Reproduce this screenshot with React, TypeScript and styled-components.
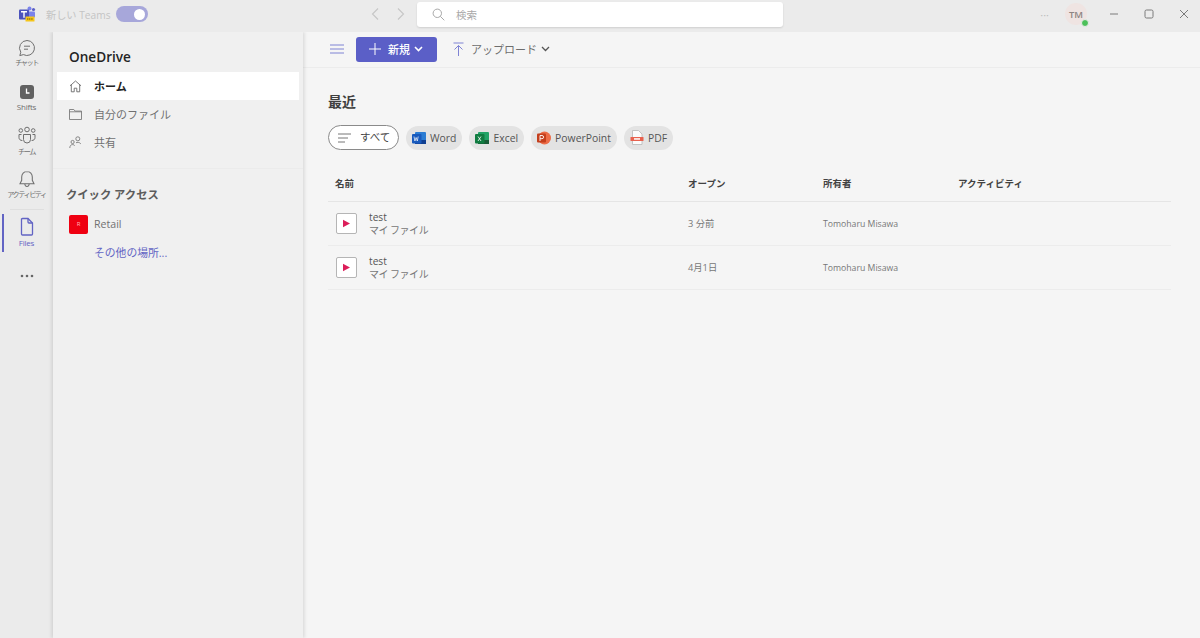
import React from "react";
import styled, { createGlobalStyle } from "styled-components";

const Global = createGlobalStyle`
  html, body { margin: 0; padding: 0; height: 100%; overflow: hidden; }
  body { font-family: "Open Sans", "Noto Sans CJK JP", sans-serif; background: #f5f5f5; }
  #root { height: 100%; }
  * { box-sizing: border-box; }
`;

const Page = styled.div`
  width: 1200px; height: 638px; display: flex; flex-direction: column; background: #f5f5f5; overflow: hidden;
`;
const TitleBar = styled.header`
  height: 32px; flex: none; background: #ebebeb; display: flex; align-items: center; padding-bottom: 4px;
`;
const TitleLeft = styled.div`
  width: 370px; padding-left: 18px; display: flex; align-items: center; flex: none;
`;
const NewTeams = styled.span`
  font-size: 10.2px; color: #c4c4c4; margin-left: 10px; white-space: nowrap; width: 60px;
`;
const Toggle = styled.span`
  width: 32px; height: 16px; border-radius: 8px; background: #a7a7da; margin-left: 10px; display: flex; align-items: center; justify-content: flex-end; padding-right: 3px;
`;
const Knob = styled.span`
  width: 11px; height: 11px; border-radius: 50%; background: #fff;
`;
const NavArrows = styled.div`
  width: 36px; display: flex; justify-content: space-between; align-items: center; margin-right: 11px; flex: none;
`;
const SearchBox = styled.div`
  width: 366px; height: 25px; background: #fff; border-radius: 3px; box-shadow: 0 1px 2px rgba(0,0,0,.12); display: flex; align-items: center; padding-left: 15px; gap: 11px; font-size: 10.5px; color: #a8a8a8; flex: none;
`;
const TitleRight = styled.div`
  margin-left: auto; display: flex; align-items: center; padding-right: 10px;
`;
const Dots = styled.span`
  font-size: 11px; color: #bdbdbd; margin-right: 16px; line-height: 1;
`;
const Avatar = styled.div`
  width: 22px; height: 22px; border-radius: 50%; background: #efe4e2; color: #8e8583; font-size: 9.5px; font-weight: 600; display: flex; align-items: center; justify-content: center; position: relative; margin-right: 21px;
`;
const Presence = styled.span`
  position: absolute; right: -2px; bottom: -2px; width: 8px; height: 8px; border-radius: 50%; background: #4cc05a; border: 1px solid #ebebeb;
`;
const WinIcons = styled.div`
  display: flex; gap: 23px; align-items: center;
`;

const Body = styled.div`
  flex: 1; display: flex; min-height: 0; overflow: hidden;
`;
const Rail = styled.nav`
  width: 53px; flex: none; background: #ebebeb; display: flex; flex-direction: column; align-items: center; padding-top: 6px;
`;
const RailItem = styled.div<{ $active?: boolean }>`
  width: 53px; height: ${(p) => (p.$active ? "38px" : "43.5px")}; flex: none; display: flex; flex-direction: column; align-items: center; padding-top: ${(p) => (p.$active ? "3px" : "1px")}; margin-top: ${(p) => (p.$active ? "4px" : "0")}; color: ${(p) => (p.$active ? "#6264c4" : "#6f6f6f")}; position: relative;
  ${(p) => p.$active && `
    &::before { content: ""; position: absolute; left: 2px; top: 0; bottom: 0; width: 1.5px; background: #6264c4; }
  `}
`;
const RailLabel = styled.span<{ $latin?: boolean }>`
  font-size: ${(p) => (p.$latin ? "8px" : "7.2px")}; line-height: 11px; white-space: nowrap; letter-spacing: ${(p) => (p.$latin ? "-0.2px" : "-1.5px")};
`;
const RailDivider = styled.div`
  width: 34px; height: 1px; flex: none; background: #dfdfdf; margin-top: -3px;
`;
const RailMore = styled.div`
  margin-top: 22px; color: #666; display: flex;
`;
const Sidebar = styled.aside`
  width: 250px; flex: none; background: #f0f0f0; box-shadow: -2px 0 3px rgba(0,0,0,.09), 2px 0 3px rgba(0,0,0,.09); z-index: 1; padding: 16px 3px 0 4px; display: flex; flex-direction: column;
`;
const SideTitle = styled.h2`
  margin: 0 0 6px 12px; font-size: 13.6px; line-height: 18px; font-weight: 600; color: #242424;
`;
const NavRow = styled.div<{ $active?: boolean }>`
  height: 28px; display: flex; align-items: center; padding-left: 12px; gap: 12px; font-size: 11px; background: ${(p) => (p.$active ? "#fff" : "transparent")}; color: ${(p) => (p.$active ? "#242424" : "#707070")}; font-weight: ${(p) => (p.$active ? 700 : 400)}; width: 242px;
`;
const SideDivider = styled.div`
  height: 1px; background: #ebebeb; margin: 12px -3px 0 -4px;
`;
const SectionTitle = styled.h3`
  margin: 17px 0 6px 9px; font-size: 11.3px; line-height: 18px; font-weight: 700; color: #5c5c5c;
`;
const RetailIcon = styled.span`
  width: 19px; height: 19px; border-radius: 2px; background: #ef0011; color: #ffb3b3; font-size: 6px; display: flex; align-items: center; justify-content: center; flex: none;
`;
const RetailRow = styled(NavRow)`
  gap: 6px; font-size: 10.6px;
`;
const MoreLink = styled.div`
  height: 28px; padding-left: 37px; font-size: 10.8px; color: #6264c4; display: flex; align-items: center;
`;
const Main = styled.main`
  flex: 1; min-width: 0; display: flex; flex-direction: column;
`;
const Toolbar = styled.div`
  height: 36px; flex: none; border-bottom: 1px solid #ececec; display: flex; align-items: center; padding-left: 27px; padding-bottom: 1px;
`;
const NewButton = styled.div`
  width: 81px; height: 25px; margin-left: 12px; border-radius: 3px; background: #5b5fc7; color: #fff; font-size: 11px; display: flex; align-items: center; padding-left: 13px; gap: 7px; font-weight: 500;
`;
const Upload = styled.div`
  display: flex; align-items: center; color: #6e6e6e; font-size: 11px; margin-left: 16px; gap: 7px;
`;
const CaretSlot = styled.span`
  display: flex; margin-left: -3px;
`;
const Content = styled.div`
  padding: 24px 29px 0 25px; display: flex; flex-direction: column;
`;
const Heading = styled.h1`
  margin: 0 0 13px; font-size: 14px; line-height: 20px; font-weight: 700; color: #3f3f3f;
`;
const Chips = styled.div`
  display: flex; gap: 7px; align-items: center; margin-bottom: 17px;
`;
const AllChip = styled.div`
  width: 71px; height: 25px; border-radius: 13px; border: 1px solid #8a8a8a; background: #fff; display: flex; align-items: center; padding-left: 9px; gap: 9px; font-size: 10.5px; color: #444; margin-right: -0.000px;
`;
const AllLabel = styled.span`
  margin-top: -3px;
`;
const Chip = styled.div`
  height: 24px; border-radius: 12px; background: #e3e3e3; display: flex; align-items: center; padding: 0 6px 0 6px; gap: 4px; font-size: 10.4px; color: #555;
`;
const GridRow = styled.div<{ $head?: boolean }>`
  display: grid; grid-template-columns: 353px 135px 135px 1fr; align-items: center; padding-left: 7px; height: ${(p) => (p.$head ? "35px" : "44px")}; border-bottom: 1px solid ${(p) => (p.$head ? "#e5e5e5" : "#ececec")}; width: 843px;
`;
const HeadCell = styled.div`
  font-size: 9.5px; font-weight: 700; color: #424242; padding-bottom: 3px;
`;
const NameCell = styled.div`
  display: flex; align-items: center; gap: 12px; padding-left: 1px;
`;
const VideoThumb = styled.span`
  width: 21px; height: 21px; background: #fff; border: 1px solid #b5b5b5; border-radius: 2px; display: flex; align-items: center; justify-content: center; flex: none;
`;
const NameStack = styled.div`
  display: flex; flex-direction: column;
`;
const FileName = styled.span`
  font-size: 10.2px; line-height: 13px; color: #555;
`;
const FileLoc = styled.span`
  font-size: 10px; line-height: 13px; color: #777; word-spacing: -0.5px; letter-spacing: -0.4px;
`;
const OpenCell = styled.div`
  font-size: 9.3px; color: #777; padding-bottom: 2px;
`;
const OwnerCell = styled.div`
  font-size: 8.7px; color: #777; padding-top: 1px;
`;

const TeamsLogo = () => (
  <svg width="18" height="16" viewBox="0 0 18 16">
    <circle cx="11.5" cy="2.5" r="2" fill="#7b83eb" />
    <circle cx="15.5" cy="3.5" r="1.6" fill="#5b5fc7" />
    <rect x="10" y="5.5" width="7" height="6" rx="1" fill="#7b83eb" />
    <rect x="1" y="3.5" width="10" height="10" rx="1" fill="#4b53bc" />
    <path d="M3 5.8h6M6 5.8v6" stroke="#fff" strokeWidth="1.4" fill="none" />
    <rect x="7.5" y="10.5" width="9" height="5" rx="0.6" fill="#f5c518" />
    <path d="M9 13h6" stroke="#6b5a00" strokeWidth="1.2" strokeDasharray="1.2 .6" />
  </svg>
);
const Chevron = ({ dir }: { dir: "l" | "r" }) => (
  <svg width="10" height="14" viewBox="0 0 10 14" fill="none" stroke="#c6c6c6" strokeWidth="1.1">
    <path d={dir === "l" ? "M8 1.5 2.5 7 8 12.5" : "M2 1.5 7.5 7 2 12.5"} />
  </svg>
);
const SearchIcon = () => (
  <svg width="13" height="13" viewBox="0 0 13 13" fill="none" stroke="#a8a8a8" strokeWidth="1">
    <circle cx="5.3" cy="5.3" r="4.2" /><path d="m8.3 8.3 4 4" />
  </svg>
);
const ChatIcon = () => (
  <svg width="18" height="18" viewBox="0 0 18 18" fill="none" stroke="currentColor" strokeWidth="1">
    <path d="M9 1.5a7.5 7.5 0 1 1-3.6 14.1L1.8 16.6l1-3.4A7.5 7.5 0 0 1 9 1.5Z" />
    <path d="M6 7.2h6M6 10.2h4" />
  </svg>
);
const ShiftsIcon = () => (
  <svg width="18" height="18" viewBox="0 0 18 18">
    <rect x="2" y="2" width="14" height="14" rx="3" fill="#616161" />
    <path d="M8.5 5.5v4.5h3" fill="none" stroke="#fff" strokeWidth="1.3" />
  </svg>
);
const TeamIcon = () => (
  <svg width="20" height="20" viewBox="0 0 20 20" fill="none" stroke="currentColor" strokeWidth="1">
    <circle cx="10" cy="3.5" r="2.3" /><circle cx="3.8" cy="4.5" r="1.8" /><circle cx="16.2" cy="4.5" r="1.8" />
    <path d="M6.5 8.5h7v5a3.5 3.5 0 0 1-7 0v-5Z" />
    <path d="M4.5 8.5H2v3.2c0 1.7 1.3 2.8 3.4 2.8M15.5 8.5H18v3.2c0 1.7-1.3 2.8-3.4 2.8" />
  </svg>
);
const BellIcon = () => (
  <svg width="18" height="19" viewBox="0 0 18 19" fill="none" stroke="currentColor" strokeWidth="1.05">
    <path d="M9 1.5c-3.2 0-5.3 2.4-5.3 5.5v3.3L2 13.8h14l-1.7-3.5V7C14.3 3.900 12.200 1.500 9 1.500Z" />
    <path d="M6.800 14c.2 1.500 1.100 2.500 2.200 2.500s2-1 2.200-2.500" />
  </svg>
);
const FileIcon = () => (
  <svg width="18" height="20" viewBox="0 0 18 20" fill="none" stroke="currentColor" strokeWidth="1.3">
    <path d="M3.500 2.500a1 1 0 0 1 1-1h5.500l4.500 4.500v11a1 1 0 0 1-1 1h-9a1 1 0 0 1-1-1v-15.500Z" />
    <path d="M10 1.500v3.500a1 1 0 0 0 1 1h3.500" />
  </svg>
);
const HomeIcon = () => (
  <svg width="13" height="13" viewBox="0 0 13 13" fill="none" stroke="#6a6a6a" strokeWidth="0.9">
    <path d="M1 5.800 6.500 1 12 5.800M2.300 4.800v7h2.900V8.200h2.600v3.600h2.900v-7" />
  </svg>
);
const FolderIcon = () => (
  <svg width="13" height="13" viewBox="0 0 13 13" fill="none" stroke="#7a7a7a" strokeWidth="0.9">
    <path d="M.5 1.500h4.300l1.300 1.600h6.400v8.400H.5zM.5 3.800h12" />
  </svg>
);
const ShareIcon = () => (
  <svg width="13" height="13" viewBox="0 0 13 13" fill="none" stroke="#7a7a7a" strokeWidth="0.9">
    <circle cx="8.800" cy="2.800" r="2" /><circle cx="3.600" cy="6" r="1.600" />
    <path d="M.8 12c0-2 1-3.400 2.800-3.400 1 0 1.700.4 2.100 1M7 6.800c1-.7 3.400-.8 4.800 1" />
  </svg>
);
const MenuIcon = () => (
  <svg width="14" height="10" viewBox="0 0 14 10" fill="none" stroke="#7f83d4" strokeWidth="1">
    <path d="M0 1h14M0 5h14M0 9h14" />
  </svg>
);
const UploadIcon = () => (
  <svg width="11" height="15" viewBox="0 0 11 15" fill="none" stroke="#7f83d4" strokeWidth="1">
    <path d="M.5 1h10M5.500 14V3.500M1.500 7.500l4-4 4 4" />
  </svg>
);
const DownChevron = ({ color, width }: { color: string; width: number }) => (
  <svg width="9" height="6" viewBox="0 0 9 6" fill="none" stroke={color} strokeWidth={width}>
    <path d="m1 1 3.500 3.500L8 1" />
  </svg>
);
const WordIcon = () => (
  <svg width="14" height="14" viewBox="0 0 14 14">
    <rect x="3" y="1" width="11" height="12" rx="1" fill="#2b7cd3" />
    <rect x="3" y="9" width="11" height="4" fill="#103f91" />
    <rect x="0" y="3" width="9.500" height="9.500" rx="1" fill="#185abd" />
    <path d="m2 5.500.9 4.500 1.200-3.500 1.200 3.500.9-4.500" stroke="#fff" strokeWidth=".7" fill="none" />
  </svg>
);
const ExcelIcon = () => (
  <svg width="14" height="14" viewBox="0 0 14 14">
    <rect x="3" y="1" width="11" height="12" rx="1" fill="#21a366" />
    <rect x="3" y="9" width="11" height="4" fill="#185c37" />
    <rect x="0" y="3" width="9.500" height="9.500" rx="1" fill="#107c41" />
    <path d="m3 5.500 3 4.500M6 5.500l-3 4.500" stroke="#fff" strokeWidth=".8" fill="none" />
  </svg>
);
const PptIcon = () => (
  <svg width="14" height="14" viewBox="0 0 14 14">
    <circle cx="7.500" cy="7" r="6.500" fill="#ed6c47" />
    <rect x="0" y="2.500" width="9" height="9" rx="1" fill="#c43e1c" />
    <path d="M3 10V4.500h2a1.500 1.500 0 0 1 0 3.200H3" stroke="#fff" strokeWidth=".9" fill="none" />
  </svg>
);
const PdfIcon = () => (
  <svg width="14" height="15" viewBox="0 0 14 15">
    <path d="M2.500.5h6l3.500 3.500v10.500h-9.500z" fill="#fbfbfb" stroke="#b8b8b8" strokeWidth=".8" />
    <rect x="0.500" y="7" width="13" height="4" rx=".6" fill="#e8624f" />
    <rect x="4" y="8.200" width="6" height="1.500" fill="#fff" />
  </svg>
);
const PlayThumb = () => (
  <VideoThumb>
    <svg width="9" height="9" viewBox="0 0 9 9"><path d="M1 .8 8 4.500 1 8.200z" fill="#dc1e5a" /></svg>
  </VideoThumb>
);
const ThreeDots = () => (
  <svg width="14" height="4" viewBox="0 0 14 4" fill="#666">
    <circle cx="2" cy="2" r="1.300" /><circle cx="7" cy="2" r="1.300" /><circle cx="12" cy="2" r="1.300" />
  </svg>
);

const railItems = [
  { icon: <ChatIcon />, label: "チャット", latin: false },
  { icon: <ShiftsIcon />, label: "Shifts", latin: true },
  { icon: <TeamIcon />, label: "チーム", latin: false },
  { icon: <BellIcon />, label: "アクティビティ", latin: false },
];
const files = [{ open: "3 分前" }, { open: "4月1日" }];

export default function App() {
  return (
    <Page>
      <Global />
      <TitleBar>
        <TitleLeft>
          <TeamsLogo />
          <NewTeams>新しい Teams</NewTeams>
          <Toggle><Knob /></Toggle>
        </TitleLeft>
        <NavArrows><Chevron dir="l" /><Chevron dir="r" /></NavArrows>
        <SearchBox><SearchIcon /><span>検索</span></SearchBox>
        <TitleRight>
          <Dots>···</Dots>
          <Avatar>TM<Presence /></Avatar>
          <WinIcons>
            <svg width="12" height="12" viewBox="0 0 12 12" stroke="#7a7a7a" fill="none"><path d="M2 6h8" /></svg>
            <svg width="12" height="12" viewBox="0 0 12 12" stroke="#7a7a7a" fill="none"><rect x="2" y="2" width="8" height="8" rx="1.500" /></svg>
            <svg width="12" height="12" viewBox="0 0 12 12" stroke="#7a7a7a" fill="none"><path d="m2 2 8 8M10 2l-8 8" /></svg>
          </WinIcons>
        </TitleRight>
      </TitleBar>
      <Body>
        <Rail>
          {railItems.map((r) => (
            <RailItem key={r.label}>{r.icon}<RailLabel $latin={r.latin}>{r.label}</RailLabel></RailItem>
          ))}
          <RailDivider />
          <RailItem $active><FileIcon /><RailLabel $latin>Files</RailLabel></RailItem>
          <RailMore><ThreeDots /></RailMore>
        </Rail>
        <Sidebar>
          <SideTitle>OneDrive</SideTitle>
          <NavRow $active><HomeIcon />ホーム</NavRow>
          <NavRow><FolderIcon />自分のファイル</NavRow>
          <NavRow><ShareIcon />共有</NavRow>
          <SideDivider />
          <SectionTitle>クイック アクセス</SectionTitle>
          <RetailRow><RetailIcon>R</RetailIcon>Retail</RetailRow>
          <MoreLink>その他の場所...</MoreLink>
        </Sidebar>
        <Main>
          <Toolbar>
            <MenuIcon />
            <NewButton>
              <svg width="12" height="12" viewBox="0 0 12 12" stroke="#fff" fill="none"><path d="M6 0v12M0 6h12" /></svg>
              <span>新規</span>
              <CaretSlot><DownChevron color="#fff" width={1.600} /></CaretSlot>
            </NewButton>
            <Upload>
              <UploadIcon />
              <span>アップロード</span>
              <CaretSlot><DownChevron color="#555" width={1.300} /></CaretSlot>
            </Upload>
          </Toolbar>
          <Content>
            <Heading>最近</Heading>
            <Chips>
              <AllChip>
                <svg width="13" height="10" viewBox="0 0 13 10" stroke="#777" fill="none"><path d="M0 1h13M0 5h10M0 9h7" /></svg>
                <AllLabel>すべて</AllLabel>
              </AllChip>
              <Chip><WordIcon />Word</Chip>
              <Chip><ExcelIcon />Excel</Chip>
              <Chip><PptIcon />PowerPoint</Chip>
              <Chip><PdfIcon />PDF</Chip>
            </Chips>
            <GridRow $head>
              <HeadCell>名前</HeadCell>
              <HeadCell>オープン</HeadCell>
              <HeadCell>所有者</HeadCell>
              <HeadCell>アクティビティ</HeadCell>
            </GridRow>
            {files.map((f) => (
              <GridRow key={f.open}>
                <NameCell>
                  <PlayThumb />
                  <NameStack>
                    <FileName>test</FileName>
                    <FileLoc>マイ ファイル</FileLoc>
                  </NameStack>
                </NameCell>
                <OpenCell>{f.open}</OpenCell>
                <OwnerCell>Tomoharu Misawa</OwnerCell>
                <div />
              </GridRow>
            ))}
          </Content>
        </Main>
      </Body>
    </Page>
  );
}
